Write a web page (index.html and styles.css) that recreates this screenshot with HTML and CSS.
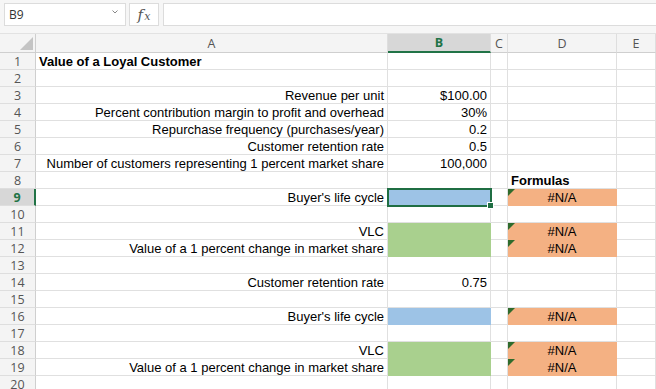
FILE: index.html
```html
<!DOCTYPE html>
<html lang="en">
<head>
    <meta charset="UTF-8">
    <title>Value of a Loyal Customer</title>
    <link rel="stylesheet" href="styles.css">
</head>
<body>
    <div class="formula-bar">
        <div class="name-box">
            <span>B9</span>
            <svg class="chevron" width="8" height="6" viewBox="0 0 8 6"><path d="M1.5 1.5 L4 4 L6.5 1.5" fill="none" stroke="#888" stroke-width="1"/></svg>
        </div>
        <div class="fx-box"><i>f</i><span class="fx-x">x</span></div>
        <div class="formula-input"></div>
    </div>

    <div class="sheet">
        <!-- header row -->
        <div class="corner"></div>
        <div class="col-head">A</div>
        <div class="col-head active">B</div>
        <div class="col-head">C</div>
        <div class="col-head">D</div>
        <div class="col-head">E</div>

        <div class="row-head">1</div>
        <div class="cell bold left">Value of a Loyal Customer</div>
        <div class="cell"></div><div class="cell"></div><div class="cell"></div><div class="cell"></div>

        <div class="row-head">2</div>
        <div class="cell"></div><div class="cell"></div><div class="cell"></div><div class="cell"></div><div class="cell"></div>

        <div class="row-head">3</div>
        <div class="cell">Revenue per unit</div>
        <div class="cell">$100.00</div><div class="cell"></div><div class="cell"></div><div class="cell"></div>

        <div class="row-head">4</div>
        <div class="cell">Percent contribution margin to profit and overhead</div>
        <div class="cell">30%</div><div class="cell"></div><div class="cell"></div><div class="cell"></div>

        <div class="row-head">5</div>
        <div class="cell">Repurchase frequency (purchases/year)</div>
        <div class="cell">0.2</div><div class="cell"></div><div class="cell"></div><div class="cell"></div>

        <div class="row-head">6</div>
        <div class="cell">Customer retention rate</div>
        <div class="cell">0.5</div><div class="cell"></div><div class="cell"></div><div class="cell"></div>

        <div class="row-head">7</div>
        <div class="cell">Number of customers representing 1 percent market share</div>
        <div class="cell">100,000</div><div class="cell"></div><div class="cell"></div><div class="cell"></div>

        <div class="row-head">8</div>
        <div class="cell"></div><div class="cell"></div><div class="cell"></div>
        <div class="cell bold left">Formulas</div>
        <div class="cell"></div>

        <div class="row-head active">9</div>
        <div class="cell">Buyer's life cycle</div>
        <div class="cell fill-blue selected"></div>
        <div class="cell"></div>
        <div class="cell fill-orange center flag">#N/A</div>
        <div class="cell"></div>

        <div class="row-head">10</div>
        <div class="cell"></div><div class="cell"></div><div class="cell"></div><div class="cell"></div><div class="cell"></div>

        <div class="row-head">11</div>
        <div class="cell">VLC</div>
        <div class="cell fill-green"></div>
        <div class="cell"></div>
        <div class="cell fill-orange center flag">#N/A</div>
        <div class="cell"></div>

        <div class="row-head">12</div>
        <div class="cell">Value of a 1 percent change in market share</div>
        <div class="cell fill-green"></div>
        <div class="cell"></div>
        <div class="cell fill-orange center flag">#N/A</div>
        <div class="cell"></div>

        <div class="row-head">13</div>
        <div class="cell"></div><div class="cell"></div><div class="cell"></div><div class="cell"></div><div class="cell"></div>

        <div class="row-head">14</div>
        <div class="cell">Customer retention rate</div>
        <div class="cell">0.75</div><div class="cell"></div><div class="cell"></div><div class="cell"></div>

        <div class="row-head">15</div>
        <div class="cell"></div><div class="cell"></div><div class="cell"></div><div class="cell"></div><div class="cell"></div>

        <div class="row-head">16</div>
        <div class="cell">Buyer's life cycle</div>
        <div class="cell fill-blue"></div>
        <div class="cell"></div>
        <div class="cell fill-orange center flag">#N/A</div>
        <div class="cell"></div>

        <div class="row-head">17</div>
        <div class="cell"></div><div class="cell"></div><div class="cell"></div><div class="cell"></div><div class="cell"></div>

        <div class="row-head">18</div>
        <div class="cell">VLC</div>
        <div class="cell fill-green"></div>
        <div class="cell"></div>
        <div class="cell fill-orange center flag">#N/A</div>
        <div class="cell"></div>

        <div class="row-head">19</div>
        <div class="cell">Value of a 1 percent change in market share</div>
        <div class="cell fill-green"></div>
        <div class="cell"></div>
        <div class="cell fill-orange center flag">#N/A</div>
        <div class="cell"></div>

        <div class="row-head">20</div>
        <div class="cell"></div><div class="cell"></div><div class="cell"></div><div class="cell"></div><div class="cell"></div>
    </div>
</body>
</html>
```

FILE: styles.css
```css
* {
    margin: 0;
    padding: 0;
    box-sizing: border-box;
}

body {
    font-family: "Liberation Sans", Arial, sans-serif;
    background-color: #ffffff;
    color: #000;
    overflow: hidden;
}

.formula-bar {
    display: flex;
    align-items: center;
    height: 34px;
    padding: 0 0 4px 4px;
    background-color: #f6f6f6;
    border-bottom: 1px solid #e2e2e2;
}

.name-box {
    width: 122px;
    height: 23px;
    display: flex;
    align-items: center;
    justify-content: space-between;
    padding: 0 6px 0 4px;
    background-color: #fff;
    border: 1px solid #dcdcdc;
    font-family: "Open Sans", sans-serif;
    font-size: 12px;
    color: #333;
}

.chevron {
    margin-top: -5px;
}

.fx-box {
    width: 30px;
    height: 23px;
    margin-left: 3px;
    display: flex;
    align-items: baseline;
    justify-content: center;
    padding-top: 2px;
    background-color: #fff;
    border: 1px solid #dcdcdc;
    font-family: "DejaVu Serif", "Liberation Serif", serif;
    font-size: 15px;
    color: #555;
}

.fx-x {
    font-size: 11px;
    font-style: italic;
    margin-left: 1px;
}

.formula-input {
    flex: 1;
    height: 23px;
    margin-left: 4px;
    background-color: #fff;
    border: 1px solid #dcdcdc;
    border-right: none;
}

.sheet {
    display: grid;
    grid-template-columns: 36px 352px 103px 17px 109px 1fr;
    grid-template-rows: 19px;
    grid-auto-rows: 17px;
}

.corner,
.col-head,
.row-head {
    background-color: #f4f4f4;
    font-family: "Open Sans", sans-serif;
    font-size: 12.5px;
    color: #555;
    display: flex;
    align-items: center;
    justify-content: center;
}

.corner {
    position: relative;
    border-right: 1px solid #cfcfcf;
    border-bottom: 1px solid #cfcfcf;
}

.corner::after {
    content: "";
    position: absolute;
    right: 2px;
    bottom: 2px;
    border-left: 13px solid transparent;
    border-bottom: 13px solid #c4c4c4;
}

.col-head {
    border-right: 1px solid #dedede;
    border-bottom: 1px solid #cfcfcf;
}

.col-head.active {
    background-color: #d7d7d7;
    color: #217346;
    font-weight: bold;
    border-bottom: 2px solid #217346;
}

.row-head {
    border-right: 1px solid #cfcfcf;
    border-bottom: 1px solid #dedede;
    padding-top: 1px;
}

.row-head.active {
    background-color: #d7d7d7;
    color: #217346;
    font-weight: bold;
    border-right: 2px solid #217346;
}

.cell {
    font-size: 13px;
    line-height: 17px;
    padding: 0 3px;
    text-align: right;
    white-space: nowrap;
    overflow: visible;
    border-right: 1px solid #e0e0e0;
    border-bottom: 1px solid #e0e0e0;
}

.left {
    text-align: left;
}

.center {
    text-align: center;
}

.bold {
    font-weight: bold;
}

.fill-blue {
    background-color: #9dc3e6;
    border-color: #9dc3e6;
}

.fill-green {
    background-color: #a9d08e;
    border-color: #a9d08e;
}

.fill-orange {
    background-color: #f4b183;
    border-color: #f4b183;
}

.flag {
    position: relative;
}

.flag::before {
    content: "";
    position: absolute;
    left: 0;
    top: 0;
    border-top: 7px solid #2f6b2c;
    border-right: 7px solid transparent;
}

.selected {
    position: relative;
    outline: 2px solid #1f6e43;
    outline-offset: -1px;
}

.selected::after {
    content: "";
    position: absolute;
    right: -4px;
    bottom: -4px;
    width: 5px;
    height: 5px;
    background-color: #1f6e43;
    border: 1px solid #fff;
}
```
